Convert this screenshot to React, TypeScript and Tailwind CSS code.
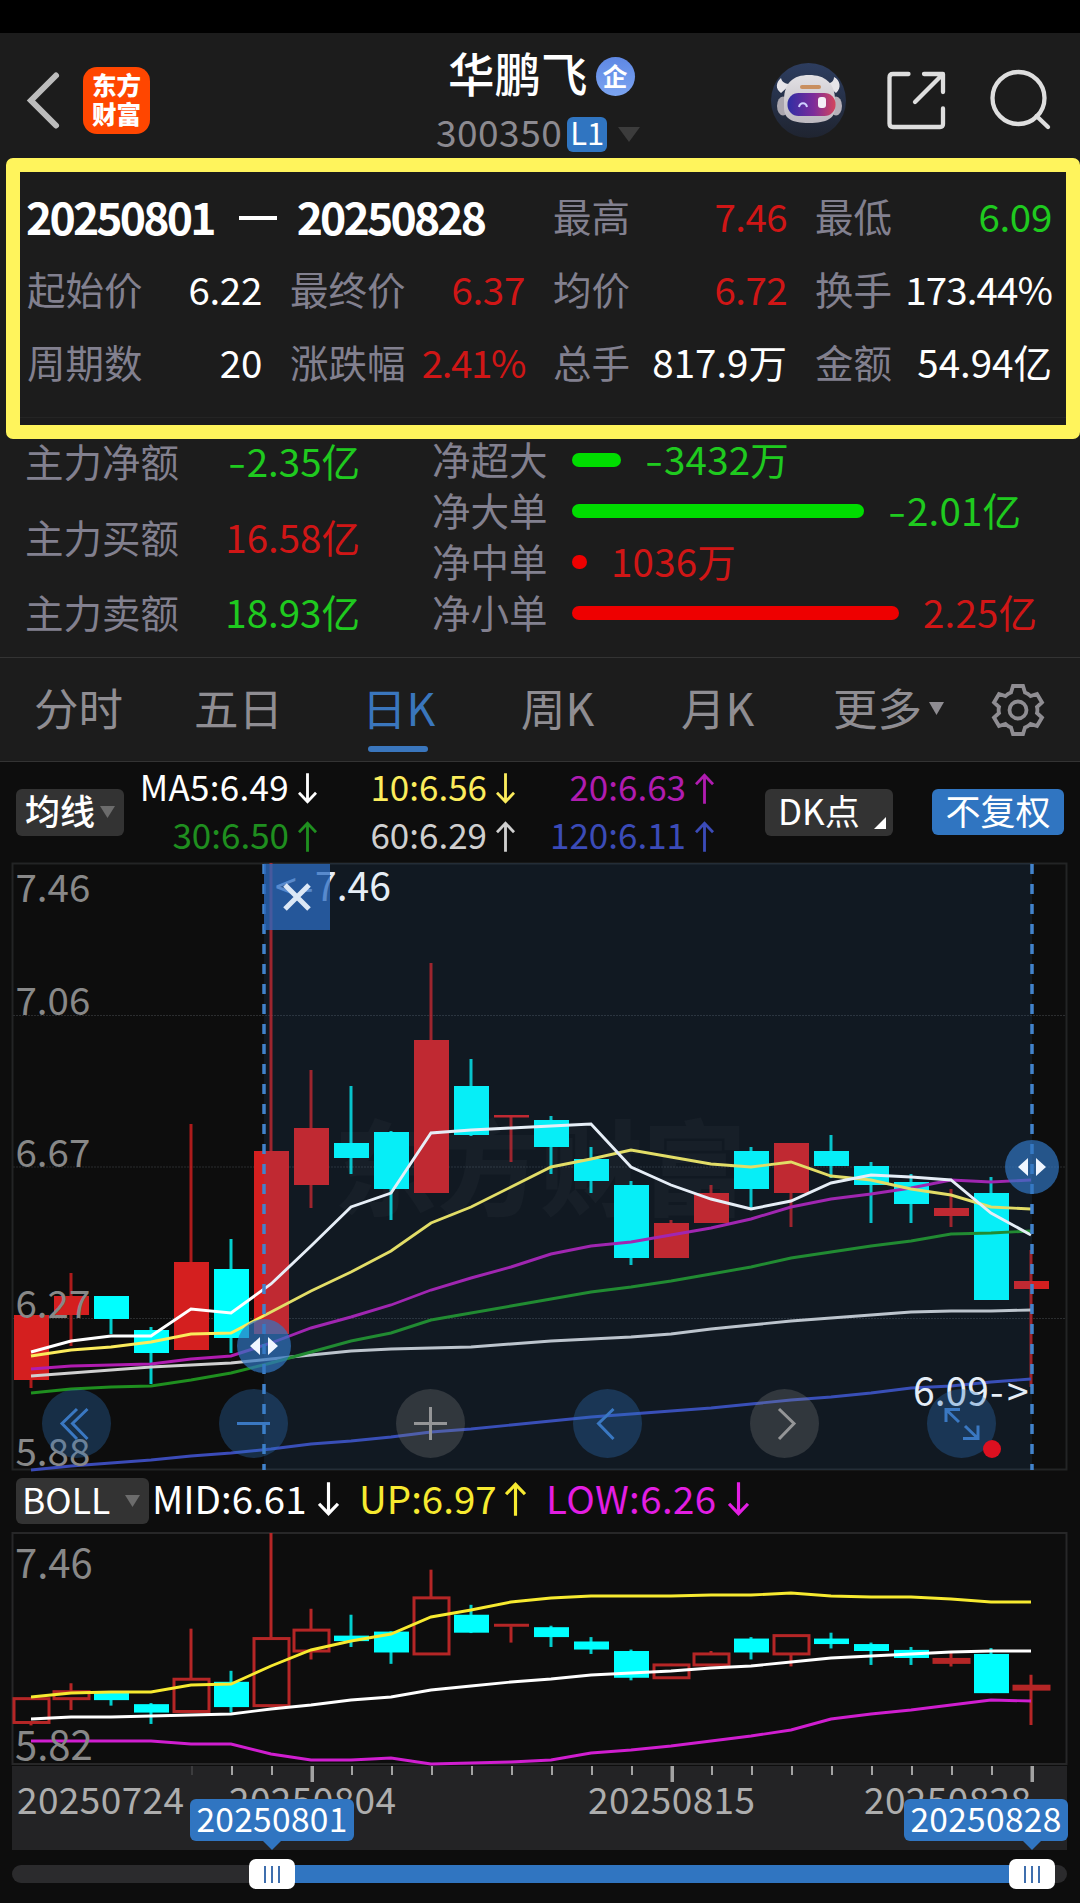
import type { ReactNode } from "react";

type Candle = {
  up: boolean;
  high: number;
  top: number;
  bottom: number;
  low: number;
};

const c = (up: boolean, high: number, top: number, bottom: number, low: number): Candle => ({
  up,
  high,
  top,
  bottom,
  low,
});

const candles: Candle[] = [
  c(true, 1315, 1315, 1380, 1388),
  c(true, 1273, 1296, 1315, 1346),
  c(false, 1296, 1296, 1319, 1334),
  c(false, 1327, 1330, 1353, 1384),
  c(true, 1124, 1262, 1350, 1350),
  c(false, 1239, 1269, 1338, 1353),
  c(true, 863, 1151, 1334, 1334),
  c(true, 1070, 1128, 1185, 1208),
  c(false, 1086, 1143, 1158, 1174),
  c(false, 1131, 1132, 1189, 1220),
  c(true, 963, 1040, 1193, 1193),
  c(false, 1059, 1086, 1135, 1136),
  c(true, 1115, 1115, 1117.5, 1162),
  c(false, 1116, 1120, 1147, 1174),
  c(false, 1147, 1159, 1181, 1193),
  c(false, 1181, 1185, 1258, 1265),
  c(true, 1220, 1223, 1258, 1258),
  c(true, 1185, 1193, 1223, 1223),
  c(false, 1147, 1151, 1189, 1208),
  c(true, 1143, 1143, 1193, 1227),
  c(false, 1135, 1151, 1166, 1178),
  c(false, 1162, 1166, 1185, 1223),
  c(false, 1174, 1182, 1204, 1223),
  c(true, 1189, 1208, 1216, 1227),
  c(false, 1177, 1193, 1300, 1300),
  c(true, 1250, 1281, 1289, 1387),
];

const maLines = [
  {
    color: "#3b4bb8",
    ys: [1470, 1466, 1463, 1460, 1456, 1453, 1449, 1444, 1441, 1437, 1432, 1429, 1425, 1421, 1417, 1414, 1411, 1408, 1404, 1400, 1397, 1393, 1388, 1386, 1382, 1379],
  },
  {
    color: "#d0d0d0",
    ys: [1376, 1373, 1370, 1367, 1365, 1363, 1359, 1355, 1351, 1349, 1348, 1347, 1344, 1341, 1339, 1337, 1334, 1329, 1325, 1321, 1318, 1315, 1312, 1311, 1311, 1310],
  },
  {
    color: "#1f8f1f",
    ys: [1393, 1389, 1387, 1386, 1380, 1373, 1363, 1352, 1341, 1333, 1320, 1313, 1306, 1299, 1292, 1287, 1281, 1274, 1267, 1258, 1252, 1246, 1241, 1234, 1233, 1231],
  },
  {
    color: "#b01cb0",
    ys: [1369, 1366, 1365, 1364, 1359, 1356, 1343, 1328, 1317, 1305, 1290, 1278, 1267, 1254, 1246, 1242, 1235, 1228, 1219, 1207, 1199, 1194, 1188, 1180, 1182, 1180],
  },
  {
    color: "#fbec5c",
    ys: [1356, 1350, 1347, 1342, 1334, 1333, 1312, 1291, 1272, 1251, 1223, 1207, 1187, 1167, 1159, 1150, 1157, 1164, 1167, 1162, 1176, 1180, 1189, 1195, 1207, 1209],
  },
  {
    color: "#ffffff",
    ys: [1352, 1341, 1336, 1336, 1309, 1313, 1284, 1246, 1207, 1193, 1133, 1130, 1128, 1126, 1124, 1167, 1185, 1199, 1209, 1201, 1183, 1175, 1177, 1180, 1213, 1235],
  },
];

const bollLines = [
  {
    color: "#d01ed0",
    ys: [1741, 1741, 1741, 1741, 1744, 1744, 1754, 1760, 1760, 1758, 1764, 1763, 1762, 1760, 1753, 1750, 1746, 1741, 1736, 1730, 1719, 1714, 1710, 1705, 1700, 1701],
  },
  {
    color: "#ffffff",
    ys: [1719, 1717, 1717, 1716, 1715, 1714, 1709, 1705, 1700, 1697, 1690, 1686, 1682, 1679, 1675, 1673, 1671, 1668, 1666, 1662, 1658, 1656, 1654, 1652, 1651, 1651],
  },
  {
    color: "#f7ea30",
    ys: [1697, 1693, 1692, 1692, 1685, 1684, 1666, 1650, 1641, 1634, 1617, 1610, 1602, 1598, 1596, 1596, 1596, 1595, 1595, 1593, 1596, 1597, 1597, 1599, 1602, 1602],
  },
];

const cx = (i: number) => 31 + 40 * i;
const points = (ys: number[]) => ys.map((y, i) => `${cx(i)},${y}`).join(" ");
const bollY = (y: number) => 1533 + (y - 863) * 0.3665;

function Arrow({ up, className }: { up?: boolean; className?: string }) {
  return (
    <svg viewBox="0 0 20 32" className={className} fill="none" stroke="currentColor" strokeWidth="3">
      {up ? <path d="M10 32V2M1 11.5L10 2l9 9.5" /> : <path d="M10 0v30M1 20.5L10 30l9-9.5" />}
    </svg>
  );
}

function StatusHeader() {
  return (
    <header className="flex h-[125px] shrink-0">
      <div className="flex w-[437px] items-start pl-[25px]">
        <svg className="mt-[37px] h-[60px] w-[36px]" viewBox="0 0 36 60" fill="none" stroke="#bcbcbc" strokeWidth="6">
          <path d="M31 5.500L6 30.500L31 55.500" strokeLinecap="round" />
        </svg>
        <div className="mt-[34px] ml-[22px] flex h-[67px] w-[67px] flex-col items-center rounded-[14px] bg-[#ff4600] pt-[3px] text-[24.500px] leading-[29px] font-black text-white">
          <span>东方</span>
          <span>财富</span>
        </div>
      </div>
      <div className="w-[333px]">
        <div className="flex h-[82px] items-center pl-[11px]">
          <span className="-mt-[3px] text-[46.500px] leading-none font-medium text-white">华鹏飞</span>
          <span className="mt-[5px] ml-[8px] flex size-[39px] items-center justify-center rounded-full bg-linear-to-b from-[#5f88e4] to-[#7ba4f0] text-[25px] leading-none font-bold text-white">
            <span className="-mt-[3px]">企</span>
          </span>
        </div>
        <div className="-mt-[1px] flex h-[40px] items-center">
          <span className="-mt-[6px] -ml-[1px] text-[37px] leading-none tracking-[0.5px] text-[#8c8a90]">300350</span>
          <span className="ml-[5px] flex h-[35px] w-[40px] items-center justify-center rounded-[6px] bg-[#3075c1] text-[31px] leading-none text-white">
            <span className="-mt-[5px]">L1</span>
          </span>
          <svg className="ml-[11px] h-[15px] w-[22px]" viewBox="0 0 22 15" fill="#3c3c3c">
            <path d="M0 0h22L11 15z" />
          </svg>
        </div>
      </div>
      <svg className="h-[125px] w-[310px]" viewBox="770 33 310 125" fill="none">
        <defs>
          <linearGradient id="halo" x1="0" y1="0" x2="0" y2="1">
            <stop offset="0" stopColor="#2d3d5f" />
            <stop offset="1" stopColor="#1f2430" />
          </linearGradient>
          <linearGradient id="shell" x1="0" y1="0" x2="0" y2="1">
            <stop offset="0" stopColor="#e2e0e4" />
            <stop offset="1" stopColor="#bdb9c0" />
          </linearGradient>
          <linearGradient id="visor" x1="0" y1="0" x2="1" y2="0">
            <stop offset="0" stopColor="#2f2ea4" />
            <stop offset="0.55" stopColor="#7d2c9a" />
            <stop offset="1" stopColor="#d4455c" />
          </linearGradient>
        </defs>
        <circle cx="808.500" cy="100.500" r="37.500" fill="url(#halo)" />
        <path d="M781 78c-5 4-6 11 0 15l10-9c-6 0-9-2-10-6zM834 77c6 3 8 11 2 16l-11-9c6 0 9-3 9-7z" fill="#e6e4e8" />
        <ellipse cx="783" cy="106" rx="6" ry="9.500" fill="#aaa6ae" />
        <ellipse cx="836" cy="106" rx="6" ry="9.500" fill="#b6b0b8" />
        <path d="M784 100c0-17 9-25 25-25s26 8 26 25v8c0 10-8 15-26 15s-25-5-25-15z" fill="url(#shell)" />
        <rect x="800" y="85" width="21" height="4" rx="2" fill="#c98f60" />
        <rect x="787.500" y="93" width="48" height="23" rx="11" fill="url(#visor)" />
        <path d="M799 107c1-5 7-5 8 0" stroke="#cfd0ff" strokeWidth="2" />
        <rect x="818" y="97" width="8" height="11" rx="3" fill="#f4eef6" />
        <g stroke="#dedede" strokeWidth="4.300" strokeLinecap="round" strokeLinejoin="round">
          <path d="M908.500 74H893q-3.500 0-3.500 3.500v46q0 3.500 3.500 3.500h47q3 0 3-3V108.500M943 92V74h-19M942 75l-27 27" />
          <circle cx="1018.500" cy="98" r="26" />
          <path d="M1036.500 116l11.500 11" />
        </g>
      </svg>
    </header>
  );
}

// the minus sign gets its own wider slot so that it lines up with the digits
function Amount({ value, className }: { value: string; className: string }) {
  const negative = value.startsWith("-");
  return (
    <span className={className}>
      {negative && <span className="inline-block w-[19px] origin-left scale-x-135">-</span>}
      {negative ? value.slice(1) : value}
    </span>
  );
}

function Stat({ label, value, color }: { label: string; value: string; color: string }) {
  return (
    <div className="flex items-center justify-between whitespace-nowrap">
      <span className="text-[#82808f]">{label}</span>
      <Amount value={value} className={color} />
    </div>
  );
}

const WHITE = "text-white";
const RED = "text-[#d01616]";
const GREEN = "text-[#1fca1f]";

function RangeStats() {
  return (
    <section className="ml-[6px] h-[281px] shrink-0 rounded-[7px] border-[14px] border-[#fff45c] pt-[7px] pl-[7px]">
      <div className="grid auto-rows-[73px] grid-cols-[235px_235px_234px_237px] gap-x-[28px] text-[38.500px] leading-[73px]">
        <div className="col-span-2 flex items-center text-[44.500px] font-bold tracking-[-2.800px] whitespace-nowrap text-white">
          <span className="-ml-[1px]">20250801</span>
          <span className="mt-[5px] mr-[20px] ml-[25px] h-[4px] w-[38px] bg-white" />
          <span>20250828</span>
        </div>
        <Stat label="最高" value="7.46" color={`${RED} tracking-[-0.6px]`} />
        <Stat label="最低" value="6.09" color={`${GREEN} tracking-[-0.3px]`} />
        <Stat label="起始价" value="6.22" color={`${WHITE} tracking-[-0.3px]`} />
        <Stat label="最终价" value="6.37" color={`${RED} tracking-[-0.3px]`} />
        <Stat label="均价" value="6.72" color={`${RED} tracking-[-0.6px]`} />
        <Stat label="换手" value="173.44%" color={`${WHITE} tracking-[-0.9px]`} />
        <Stat label="周期数" value="20" color={`${WHITE} tracking-[-0.3px]`} />
        <Stat label="涨跌幅" value="2.41%" color={`${RED} tracking-[-1.4px]`} />
        <Stat label="总手" value="817.9万" color={WHITE} />
        <Stat label="金额" value="54.94亿" color={WHITE} />
      </div>
      <div className="mt-[19px] -ml-[7px] h-px bg-[#242424]" />
    </section>
  );
}

const flows = [
  { label: "净超大", width: 49, value: "-3432万", bar: "bg-[#00dc00]", color: GREEN },
  { label: "净大单", width: 292, value: "-2.01亿", bar: "bg-[#00dc00]", color: GREEN },
  { label: "净中单", width: 15, value: "1036万", bar: "bg-[#ee0000]", color: RED },
  { label: "净小单", width: 327, value: "2.25亿", bar: "bg-[#ee0000]", color: RED },
];

function FundFlow() {
  return (
    <section className="flex h-[219px] shrink-0 border-b border-[#333] text-[38.500px] leading-[39px]">
      <div className="ml-[25px] flex w-[335px] flex-col gap-[36.500px] pt-[2px]">
        <Stat label="主力净额" value="-2.35亿" color={GREEN} />
        <Stat label="主力买额" value="16.58亿" color={RED} />
        <Stat label="主力卖额" value="18.93亿" color={GREEN} />
      </div>
      <div className="ml-[72px] flex flex-col gap-[12px]">
        {flows.map((f) => (
          <div key={f.label} className="flex items-center whitespace-nowrap">
            <span className="w-[140px] text-[#82808f]">{f.label}</span>
            <span className={`mt-[2px] h-[14px] rounded-full ${f.bar}`} style={{ width: f.width }} />
            <Amount value={f.value} className={`ml-[24px] tracking-[0.2px] ${f.color}`} />
          </div>
        ))}
      </div>
    </section>
  );
}

function PeriodTabs() {
  return (
    <nav className="flex h-[104px] shrink-0 items-center border-b border-[#333] pl-[34px] text-[44.500px] leading-[104px] whitespace-nowrap text-[#8f8d92]">
      <span className="-mt-[5px] w-[160px]">分时</span>
      <span className="-mt-[5px] w-[168px]">五日</span>
      <span className="relative -mt-[5px] w-[159px] text-[#3a76bd]">
        日K
        <i className="absolute bottom-[7px] left-[6px] h-[6px] w-[60px] rounded-full bg-[#3a76bd]" />
      </span>
      <span className="-mt-[5px] w-[160px]">周K</span>
      <span className="-mt-[5px] w-[152px]">月K</span>
      <span className="-mt-[5px]">更多</span>
      <svg className="-mt-[2px] ml-[7px] h-[13px] w-[15px]" viewBox="0 0 15 13" fill="currentColor">
        <path d="M0 0h15L7.500 13z" />
      </svg>
      <svg className="ml-[47px] h-[54px] w-[54px]" viewBox="-27 -27 54 54" fill="none" stroke="currentColor" strokeWidth="3.800">
        <path d="M-5-24H5L7-17.500Q10-16.500 12.500-14L19-16L24-7.500L19-3Q19.800 0 19 3L24 7.500L19 16L12.500 14Q10 16.500 7 17.500L5 24H-5L-7 17.500Q-10 16.500-12.500 14L-19 16L-24 7.500L-19 3Q-19.800 0-19-3L-24-7.500L-19-16L-12.500-14Q-10-16.500-7-17.500Z" />
        <circle r="8.500" />
      </svg>
    </nav>
  );
}

function MaCell({ children, up, className }: { children: ReactNode; up?: boolean; className: string }) {
  return (
    <div className={`flex items-center justify-end gap-[9px] ${className}`}>
      <span className="-mt-[6px]">{children}</span>
      <Arrow up={up} className="h-[31px] w-[19px]" />
    </div>
  );
}

function MaBar() {
  return (
    <div className="flex h-[100px] shrink-0 items-center text-[35px] leading-none whitespace-nowrap text-white">
      <div className="ml-[16px] flex h-[47px] w-[108px] items-center rounded-[6px] bg-[#333] pl-[9px] font-medium">
        <span className="-mt-[5px]">均线</span>
        <svg className="ml-[5px] h-[12px] w-[15px]" viewBox="0 0 15 12" fill="#6c6c6c">
          <path d="M0 0h15L7.500 12z" />
        </svg>
      </div>
      <div className="grid auto-rows-[48px] grid-cols-[193px_198px_199px]">
        <MaCell className="tracking-[0.3px] text-white">MA5:6.49</MaCell>
        <MaCell className="text-[#fbec5c]">10:6.56</MaCell>
        <MaCell up className="text-[#b01cb0]">20:6.63</MaCell>
        <MaCell up className="text-[#1f8f1f]">30:6.50</MaCell>
        <MaCell up className="text-[#cfcfcf]">60:6.29</MaCell>
        <MaCell up className="text-[#3b4bb8]">120:6.11</MaCell>
      </div>
      <div className="ml-[51px] flex h-[47px] w-[128px] items-center rounded-[6px] bg-[#333] pl-[13px]">
        <span className="-mt-[5px] w-[96px]">DK点</span>
        <svg className="mt-[22px] h-[12px] w-[12px]" viewBox="0 0 12 12" fill="#fff">
          <path d="M12 0v12H0z" />
        </svg>
      </div>
      <div className="ml-[39px] flex h-[46px] w-[132px] items-center justify-center rounded-[6px] bg-[#3075c1]">
        <span className="-mt-[5px]">不复权</span>
      </div>
    </div>
  );
}

function Handle({ x, y }: { x: number; y: number }) {
  return (
    <g>
      <circle cx={x} cy={y} r="27" fill="#3075c1" fillOpacity="0.7" />
      <path d={`M${x - 4} ${y - 9}v18l-10-9zM${x + 4} ${y - 9}v18l10-9z`} fill="#f0f6ff" />
    </g>
  );
}

function KLineChart() {
  return (
    <svg className="h-[608px] w-[1080px] shrink-0 overflow-visible" viewBox="0 862 1080 608">
      <g fill="none" stroke="#232425" strokeWidth="2">
        <rect x="12.500" y="863.500" width="1054" height="606" />
        <path d="M13 1015.500H1066M13 1167H1066M13 1318.500H1066" stroke="#2b2d2f" strokeWidth="1" strokeDasharray="2 1" />
      </g>
      <text x="334" y="1208" fontSize="103" fontWeight="900" fill="#fff" fillOpacity="0.03">
        东方财富
      </text>
      {candles.map((k, i) => (
        <g key={i} fill={k.up ? "#d41f1f" : "#00ffff"}>
          <rect x={cx(i) - 1.5} y={k.high} width="3" height={k.low - k.high} opacity="0.8" />
          <rect x={cx(i) - 17} y={k.top} width="35" height={k.bottom - k.top} />
        </g>
      ))}
      {maLines.map((l) => (
        <polyline key={l.color} points={points(l.ys)} fill="none" stroke={l.color} strokeWidth="2.900" />
      ))}
      <g fontSize="38.500" fill="#888">
        <text x="15.500" y="902">7.46</text>
        <text x="15.500" y="1015">7.06</text>
        <text x="15.500" y="1167">6.67</text>
        <text x="15.500" y="1318">6.27</text>
        <text x="15.500" y="1466">5.88</text>
      </g>
      <g fontSize="39" fill="#fff">
        <text y="901">
          <tspan x="275">&lt;</tspan>
          <tspan x="300">-</tspan>
          <tspan x="315">7.46</tspan>
        </text>
        <text y="1406">
          <tspan x="913">6.09</tspan>
          <tspan x="990">-</tspan>
          <tspan x="1007">&gt;</tspan>
        </text>
      </g>
      <rect x="264" y="863" width="768" height="607" fill="#3075c1" fillOpacity="0.12" />
      <path d="M264 864V1470M1032 864V1470" stroke="#4283cc" strokeWidth="3.500" strokeDasharray="10 10" />
      <rect x="264" y="864" width="66" height="66" fill="#2b6ac0" fillOpacity="0.76" />
      <path d="M285 885l24 24M309 885l-24 24" stroke="#dce8f6" strokeWidth="5" />
      <Handle x={264} y={1346} />
      <Handle x={1032} y={1167} />
      <g fill="#3075c1" fillOpacity="0.32">
        <circle cx="76.500" cy="1423.500" r="34.500" />
        <circle cx="253.500" cy="1423.500" r="34.500" />
        <circle cx="607.500" cy="1423.500" r="34.500" />
        <circle cx="961.500" cy="1423.500" r="34.500" />
      </g>
      <g fill="#888" fillOpacity="0.27">
        <circle cx="430.500" cy="1423.500" r="34.500" />
        <circle cx="784.500" cy="1423.500" r="34.500" />
      </g>
      <g fill="none" stroke="#3a78c2" strokeWidth="3">
        <path d="M77 1409l-15 14.500L77 1439M87.500 1409l-15 14.500L87.500 1439" />
        <path d="M237 1423.500h33" />
        <path d="M613.500 1409l-15 14.500 15 15.500" />
        <path d="M946 1422v-12.500h14M946 1409.500l13 12.500M978 1425.500v13h-15M978 1438.500l-13-12.500" />
      </g>
      <g fill="none" stroke="#949597" strokeWidth="3">
        <path d="M414 1423.500h33M430.500 1407v33" />
        <path d="M779 1409l15 14.500-15 15.500" />
      </g>
      <circle cx="992" cy="1449" r="9" fill="#dc1020" />
    </svg>
  );
}

function BollBar() {
  return (
    <div className="flex h-[62px] shrink-0 items-center text-[38.500px] leading-none whitespace-nowrap">
      <div className="ml-[16px] flex h-[46px] w-[133px] items-center rounded-[6px] bg-[#333] pl-[6px] text-[35.500px] text-white">
        <span className="-mt-[5px] w-[103px]">BOLL</span>
        <svg className="h-[12px] w-[15px]" viewBox="0 0 15 12" fill="#6c6c6c">
          <path d="M0 0h15L7.500 12z" />
        </svg>
      </div>
      <div className="flex w-[206px] items-center pl-[3px] text-white">
        <span className="-mt-[7px] w-[166px]">MID:6.61</span>
        <Arrow className="-mt-[4px] h-[34px] w-[21px]" />
      </div>
      <div className="flex w-[191px] items-center pl-[4px] text-[#f7ea30]">
        <span className="-mt-[7px] w-[146px]">UP:6.97</span>
        <Arrow up className="-mt-[4px] h-[34px] w-[21px]" />
      </div>
      <div className="flex items-center text-[#e31ee3]">
        <span className="-mt-[7px] w-[182px] tracking-[0.4px]">LOW:6.26</span>
        <Arrow className="-mt-[4px] h-[34px] w-[21px]" />
      </div>
    </div>
  );
}

function BollChart() {
  return (
    <svg className="h-[234px] w-[1080px] shrink-0 overflow-visible" viewBox="0 1532 1080 234">
      <rect x="12.500" y="1533" width="1054" height="231" fill="none" stroke="#272728" strokeWidth="2" />
      {candles.map((k, i) => {
        const top = bollY(k.top);
        const bottom = bollY(k.bottom);
        const high = bollY(k.high);
        const low = bollY(k.low);
        if (!k.up) {
          return (
            <g key={i} fill="#00ffff">
              <rect x={cx(i) - 1.5} y={high} width="3" height={low - high} opacity="0.8" />
              <rect x={cx(i) - 17} y={top} width="35" height={bottom - top} />
            </g>
          );
        }
        return (
          <g key={i} fill="none" stroke="#b52626" strokeWidth="3">
            <path d={`M${cx(i)} ${high}V${top}M${cx(i)} ${bottom}V${low}`} />
            {bottom - top < 1 ? (
              <path d={`M${cx(i) - 17} ${top}h35`} />
            ) : (
              <rect x={cx(i) - 17} y={top} width="35" height={bottom - top} />
            )}
          </g>
        );
      })}
      {bollLines.map((l) => (
        <polyline key={l.color} points={points(l.ys)} fill="none" stroke={l.color} strokeWidth="2.900" />
      ))}
      <g fontSize="40" fill="#888">
        <text x="15" y="1577.500">7.46</text>
        <text x="15" y="1760">5.82</text>
      </g>
    </svg>
  );
}

function DateCallout({ children, className, tip }: { children: string; className: string; tip: string }) {
  return (
    <div className={`absolute top-[33px] flex h-[42px] w-[164px] items-center justify-center rounded-[6px] bg-[#3075c1] text-[33.500px] leading-none tracking-[0.3px] text-white ${className}`}>
      <span className="-mt-[5px]">{children}</span>
      <svg className={`absolute top-[41px] h-[10px] w-[20px] ${tip}`} viewBox="0 0 20 10" fill="#3075c1">
        <path d="M0 0h20L10 10z" />
      </svg>
    </div>
  );
}

function DateAxis() {
  const ticks = Array.from({ length: 22 }, (_, i) => i);
  return (
    <div className="relative ml-[12px] h-[84px] w-[1055px] shrink-0 bg-[#232325] text-[37px] text-[#adadad]">
      <svg className="block h-[16px] w-[1055px]" viewBox="12 0 1055 16">
        {ticks.map((i) => {
          const major = i === 3 || i === 12 || i === 21;
          return (
            <rect
              key={i}
              x={192 + i * 40 - (major ? 1.5 : 1)}
              y="0"
              width={major ? 3.5 : 2}
              height={major ? 16 : 9}
              fill={i === 0 ? "#3c3c3e" : "#a2a2a2"}
            />
          );
        })}
      </svg>
      <div className="-mt-[2px] flex pl-[5px] leading-[37px] tracking-[0.4px]">
        <span className="w-[212px]">20250724</span>
        <span className="w-[359px]">20250804</span>
        <span className="w-[276px]">20250815</span>
        <span>20250828</span>
      </div>
      <DateCallout className="left-[178px]" tip="left-[72px]">20250801</DateCallout>
      <DateCallout className="-right-[1px]" tip="right-[26px]">20250828</DateCallout>
    </div>
  );
}

function Thumb({ className }: { className: string }) {
  return (
    <div className={`absolute -top-[6px] flex h-[30px] w-[46px] items-center justify-center gap-[5px] rounded-[7px] bg-white ${className}`}>
      <i className="h-[17px] w-[2px] bg-[#3f6fae]" />
      <i className="h-[17px] w-[2px] bg-[#3f6fae]" />
      <i className="h-[17px] w-[2px] bg-[#3f6fae]" />
    </div>
  );
}

function RangeSlider() {
  return (
    <div className="relative mt-[15px] ml-[12px] h-[18px] w-[1055px] shrink-0 rounded-full bg-[#2b2b2d]">
      <div className="ml-[260px] h-[18px] w-[760px] bg-[#3075c1]" />
      <Thumb className="left-[237px]" />
      <Thumb className="right-[12px]" />
    </div>
  );
}

export default function App() {
  return (
    <main className="flex h-[1903px] w-[1080px] flex-col overflow-hidden bg-[#0d0d0d] font-['Noto_Sans_CJK_SC','Noto_Sans',sans-serif]">
      <div className="h-[33px] shrink-0 bg-black" />
      <div className="flex shrink-0 flex-col bg-[#1c1c1c]">
        <StatusHeader />
        <RangeStats />
        <FundFlow />
        <PeriodTabs />
      </div>
      <MaBar />
      <KLineChart />
      <BollBar />
      <BollChart />
      <DateAxis />
      <RangeSlider />
    </main>
  );
}
